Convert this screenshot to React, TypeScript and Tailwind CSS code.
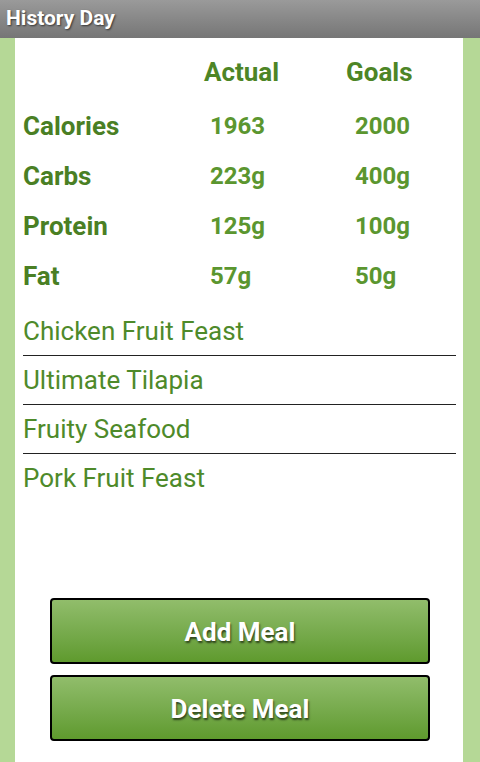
import React from "react";

const rows = [
  { label: "Calories", actual: "1963", goal: "2000" },
  { label: "Carbs", actual: "223g", goal: "400g" },
  { label: "Protein", actual: "125g", goal: "100g" },
  { label: "Fat", actual: "57g", goal: "50g" },
];

const meals = ["Chicken Fruit Feast", "Ultimate Tilapia", "Fruity Seafood", "Pork Fruit Feast"];

const Button = ({ label }: { label: string }) => (
  <button className="h-[66px] w-full rounded-[4px] border-2 border-black bg-gradient-to-b from-[#91bd6b] to-[#5f9a2d] pt-[3px] text-[26px] font-bold text-white [text-shadow:1px_2px_2px_rgba(0,0,0,0.6)]">
    {label}
  </button>
);

export default function App() {
  return (
    <div className="flex h-[762px] w-[480px] flex-col overflow-hidden bg-[#b5d896] font-['Roboto',sans-serif]">
      <div className="flex h-[38px] shrink-0 items-center bg-gradient-to-b from-[#9a9a9a] to-[#767676] px-[6px]">
        <span className="text-[21px] font-bold text-white [text-shadow:1px_1px_2px_rgba(0,0,0,0.6)]">
          History Day
        </span>
      </div>

      <div className="mx-[15px] mr-[17px] flex flex-1 flex-col bg-white px-[8px]">
        <div className="grid grid-cols-[187px_145px_1fr] pt-[9px]">
          <div className="h-[54px]" />
          <div className="-ml-[6px] flex h-[54px] items-start pt-[6px] text-[26px] font-bold text-[#4d8526]">Actual</div>
          <div className="-ml-[9px] flex h-[54px] items-start pt-[6px] text-[26px] font-bold text-[#4d8526]">Goals</div>
          {rows.map((r) => (
            <React.Fragment key={r.label}>
              <div className="flex h-[50px] items-center text-[26px] font-bold text-[#4a7f24]">{r.label}</div>
              <div className="flex h-[50px] items-center text-[24px] font-bold text-[#5b962f]">{r.actual}</div>
              <div className="flex h-[50px] items-center text-[24px] font-bold text-[#5b962f]">{r.goal}</div>
            </React.Fragment>
          ))}
        </div>

        <div className="mt-[6px] mr-[-1px]">
          {meals.map((m, i) => (
            <div
              key={m}
              className={`flex h-[49px] items-center text-[26px] text-[#4e8a2a] ${
                i < meals.length - 1 ? "border-b border-[#222]" : ""
              }`}
            >
              {m}
            </div>
          ))}
        </div>

        <div className="mt-auto flex flex-col gap-[11px] pl-[27px] pr-[25px] pb-[21px]">
          <Button label="Add Meal" />
          <Button label="Delete Meal" />
        </div>
      </div>
    </div>
  );
}
